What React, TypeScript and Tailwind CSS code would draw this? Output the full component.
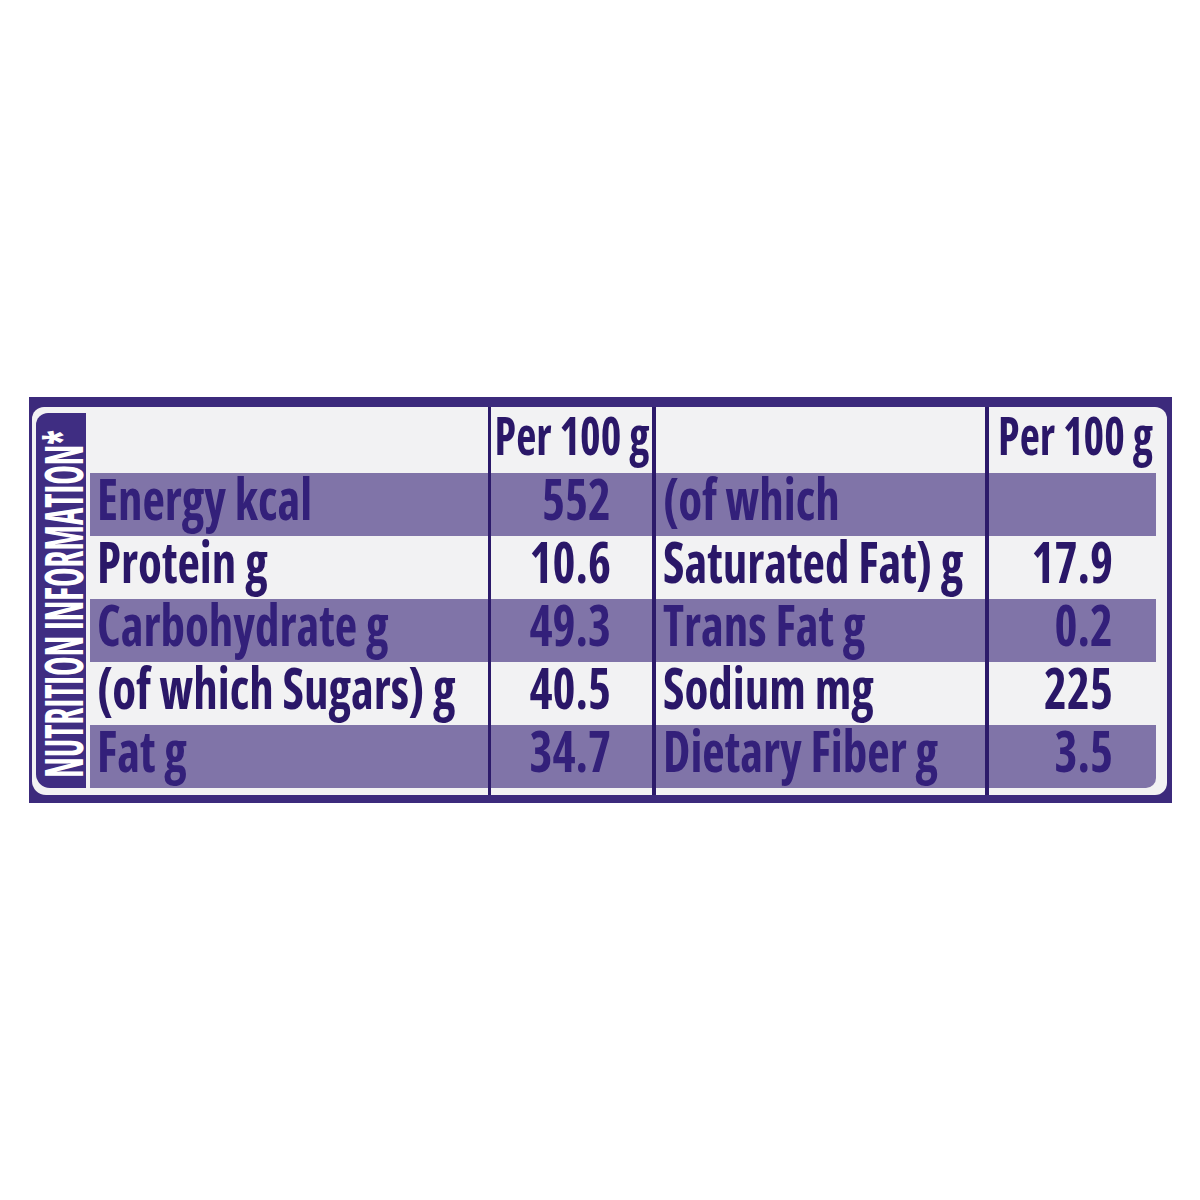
const font = { fontFamily: '"Open Sans", "Noto Sans", sans-serif', fontStretch: '75%' };

type Align = 'left' | 'right';

const columns: {
  width: string;
  border: string;
  pad: string;
  headPad: string;
  header: string;
  rows: string[];
  align: Align;
}[] = [
  {
    width: 'w-[398px]',
    border: '',
    pad: 'pl-[7px] pr-[3px]',
    headPad: '',
    header: '',
    rows: ['Energy kcal', 'Protein g', 'Carbohydrate g', '(of which Sugars) g', 'Fat g'],
    align: 'left',
  },
  {
    width: 'w-[164px]',
    border: 'border-l-[3px]',
    pad: 'pr-[41px]',
    headPad: 'pl-[1px]',
    header: 'Per 100 g',
    rows: ['552', '10.6', '49.3', '40.5', '34.7'],
    align: 'right',
  },
  {
    width: 'w-[333px]',
    border: 'border-l-4',
    pad: 'pl-[7px]',
    headPad: '',
    header: '',
    rows: ['(of which', 'Saturated Fat) g', 'Trans Fat g', 'Sodium mg', 'Dietary Fiber g'],
    align: 'left',
  },
  {
    width: 'w-[171px]',
    border: 'border-l-4',
    pad: 'pr-[43px]',
    headPad: 'pl-[6px]',
    header: 'Per 100 g',
    rows: ['', '17.9', '0.2', '225', '3.5'],
    align: 'right',
  },
];

export default function App() {
  return (
    <div className="min-h-[1200px] bg-white pt-[397px] pl-[29px]">
      {/* purple frame */}
      <div className="w-[1143px] h-[406px] bg-[#3c2a7c] pt-[10px] pl-[3px] pr-[5px] pb-[8px]">
        {/* white panel */}
        <div className="flex h-full bg-[#f2f2f3] rounded-tl-[12px] rounded-tr-[12px] rounded-bl-[14px] rounded-br-[12px] pl-[4px] pr-[7px]">
          {/* side label */}
          <div className="w-[50px] mt-[6px] mb-[7px] pt-[6px] bg-[#3f2d82] rounded-tl-[12px] rounded-bl-[14px] flex items-center justify-center">
            <span
              className="[writing-mode:vertical-rl] rotate-180 scale-x-[1.61] whitespace-nowrap text-white font-bold text-[33px] leading-none pr-[2px]"
              style={font}
            >
              NUTRITION INFORMATION*
            </span>
          </div>

          <div className="w-[4px]" />

          {/* table */}
          <div className="flex">
            {columns.map((col, ci) => (
              <div key={ci} className={`flex flex-col h-full ${col.width} ${col.border} border-[#2c1a6a]`}>
                <div className={`h-[66px] flex items-center justify-center pb-[11px] text-[44px] leading-none font-bold text-[#2a1768] ${col.headPad}`}>
                  {col.header && (
                    <span className="inline-block whitespace-nowrap scale-y-[1.2]" style={font}>
                      {col.header}
                    </span>
                  )}
                </div>
                {col.rows.map((r, ri) => {
                  const shaded = ri % 2 === 0;
                  const last = ci === columns.length - 1 && ri === col.rows.length - 1;
                  return (
                    <div
                      key={ri}
                      className={`h-[63px] flex items-center pb-[12px] text-[49px] leading-none font-bold ${col.pad} ${
                        col.align === 'left' ? 'justify-start' : 'justify-end'
                      } ${shaded ? 'bg-[#8074a8] text-[#33207a]' : 'text-[#2a1768]'} ${last ? 'rounded-br-[10px]' : ''}`}
                    >
                      {r && (
                        <span className="inline-block whitespace-nowrap scale-y-[1.16]" style={font}>
                          {r}
                        </span>
                      )}
                    </div>
                  );
                })}
              </div>
            ))}
          </div>
        </div>
      </div>
    </div>
  );
}
